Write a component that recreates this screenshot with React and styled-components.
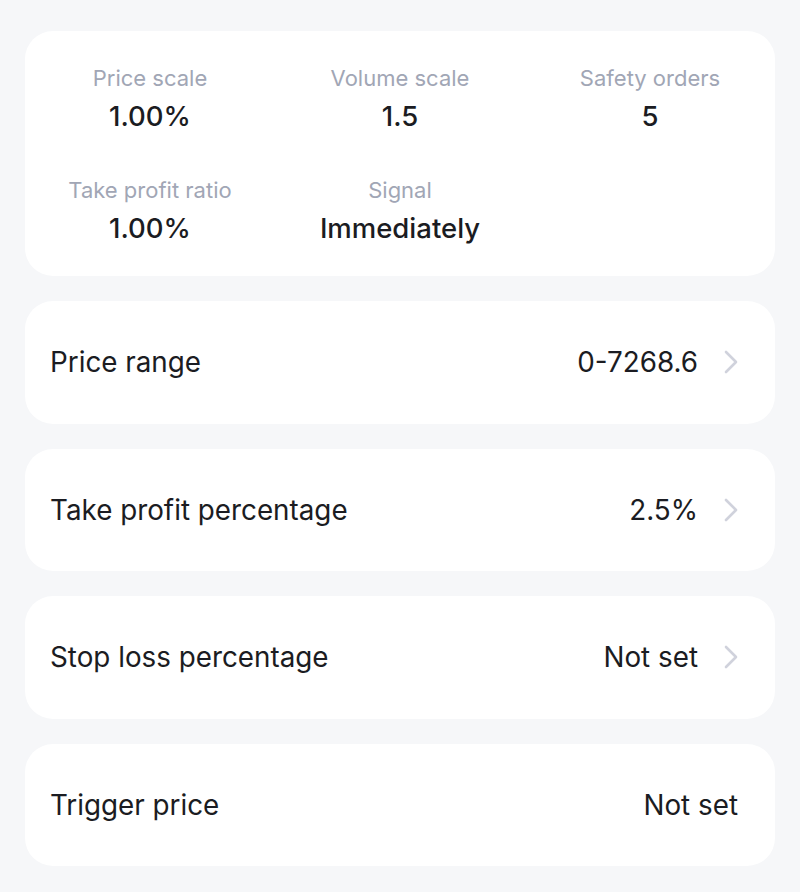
import React from 'react'
import styled, { createGlobalStyle } from 'styled-components'

const Global = createGlobalStyle`
body {
    margin: 0;
    background: #f6f7f9;
    font-family: Inter, "Liberation Sans", Arial, sans-serif;
    color: #1b1c22;
}`

const Page = styled.div`
display: flex;
flex-direction: column;
gap: 25px;
padding: 31px 25px 26px 25px;
min-height: 100vh;
box-sizing: border-box;
background: #f6f7f9;`

const Card = styled.div`
background: #ffffff;
border-radius: 28px;`

const StatGrid = styled(Card)`
display: grid;
grid-template-columns: repeat(3, 1fr);
row-gap: 39px;
padding: 31px 0 29px 0;`

const Stat = styled.div`
display: flex;
flex-direction: column;
align-items: center;
gap: 3px;`

const StatLabel = styled.div`
font-size: 22px;
line-height: 32px;
color: #a1a6b5;`

const StatValue = styled.div`
font-size: 27.5px;
line-height: 38px;
font-weight: 500;
color: #1b1c22;`

const Row = styled(Card)`
height: 122.5px;
display: flex;
align-items: center;
justify-content: space-between;
padding: 0 37px 0 25px;
box-sizing: border-box;`

const RowLabel = styled.div`
font-size: 27.8px;`

const RowRight = styled.div`
display: flex;
align-items: center;
gap: 26px;
font-size: 27.8px;`

const Chevron = () => (
    <svg width="14" height="24" viewBox="0 0 14 24" fill="none">
        <path d="M2 2 L12 12 L2 22" stroke="#d0d2dc" strokeWidth="2.6" strokeLinecap="round" strokeLinejoin="round" />
    </svg>
)

const stats = [
    ['Price scale', '1.00%'],
    ['Volume scale', '1.5'],
    ['Safety orders', '5'],
    ['Take profit ratio', '1.00%'],
    ['Signal', 'Immediately'],
]

const rows = [
    ['Price range', '0-7268.6', true],
    ['Take profit percentage', '2.5%', true],
    ['Stop loss percentage', 'Not set', true],
    ['Trigger price', 'Not set', false],
]

export default function App() {
    return <>
        <Global />
        <Page>
            <StatGrid>
                {stats.map(([label, value]) => (
                    <Stat key={label}>
                        <StatLabel>{label}</StatLabel>
                        <StatValue>{value}</StatValue>
                    </Stat>
                ))}
            </StatGrid>
            {rows.map(([label, value, arrow]) => (
                <Row key={label}>
                    <RowLabel>{label}</RowLabel>
                    <RowRight>
                        {value}
                        {arrow && <Chevron />}
                    </RowRight>
                </Row>
            ))}
        </Page>
    </>
}
